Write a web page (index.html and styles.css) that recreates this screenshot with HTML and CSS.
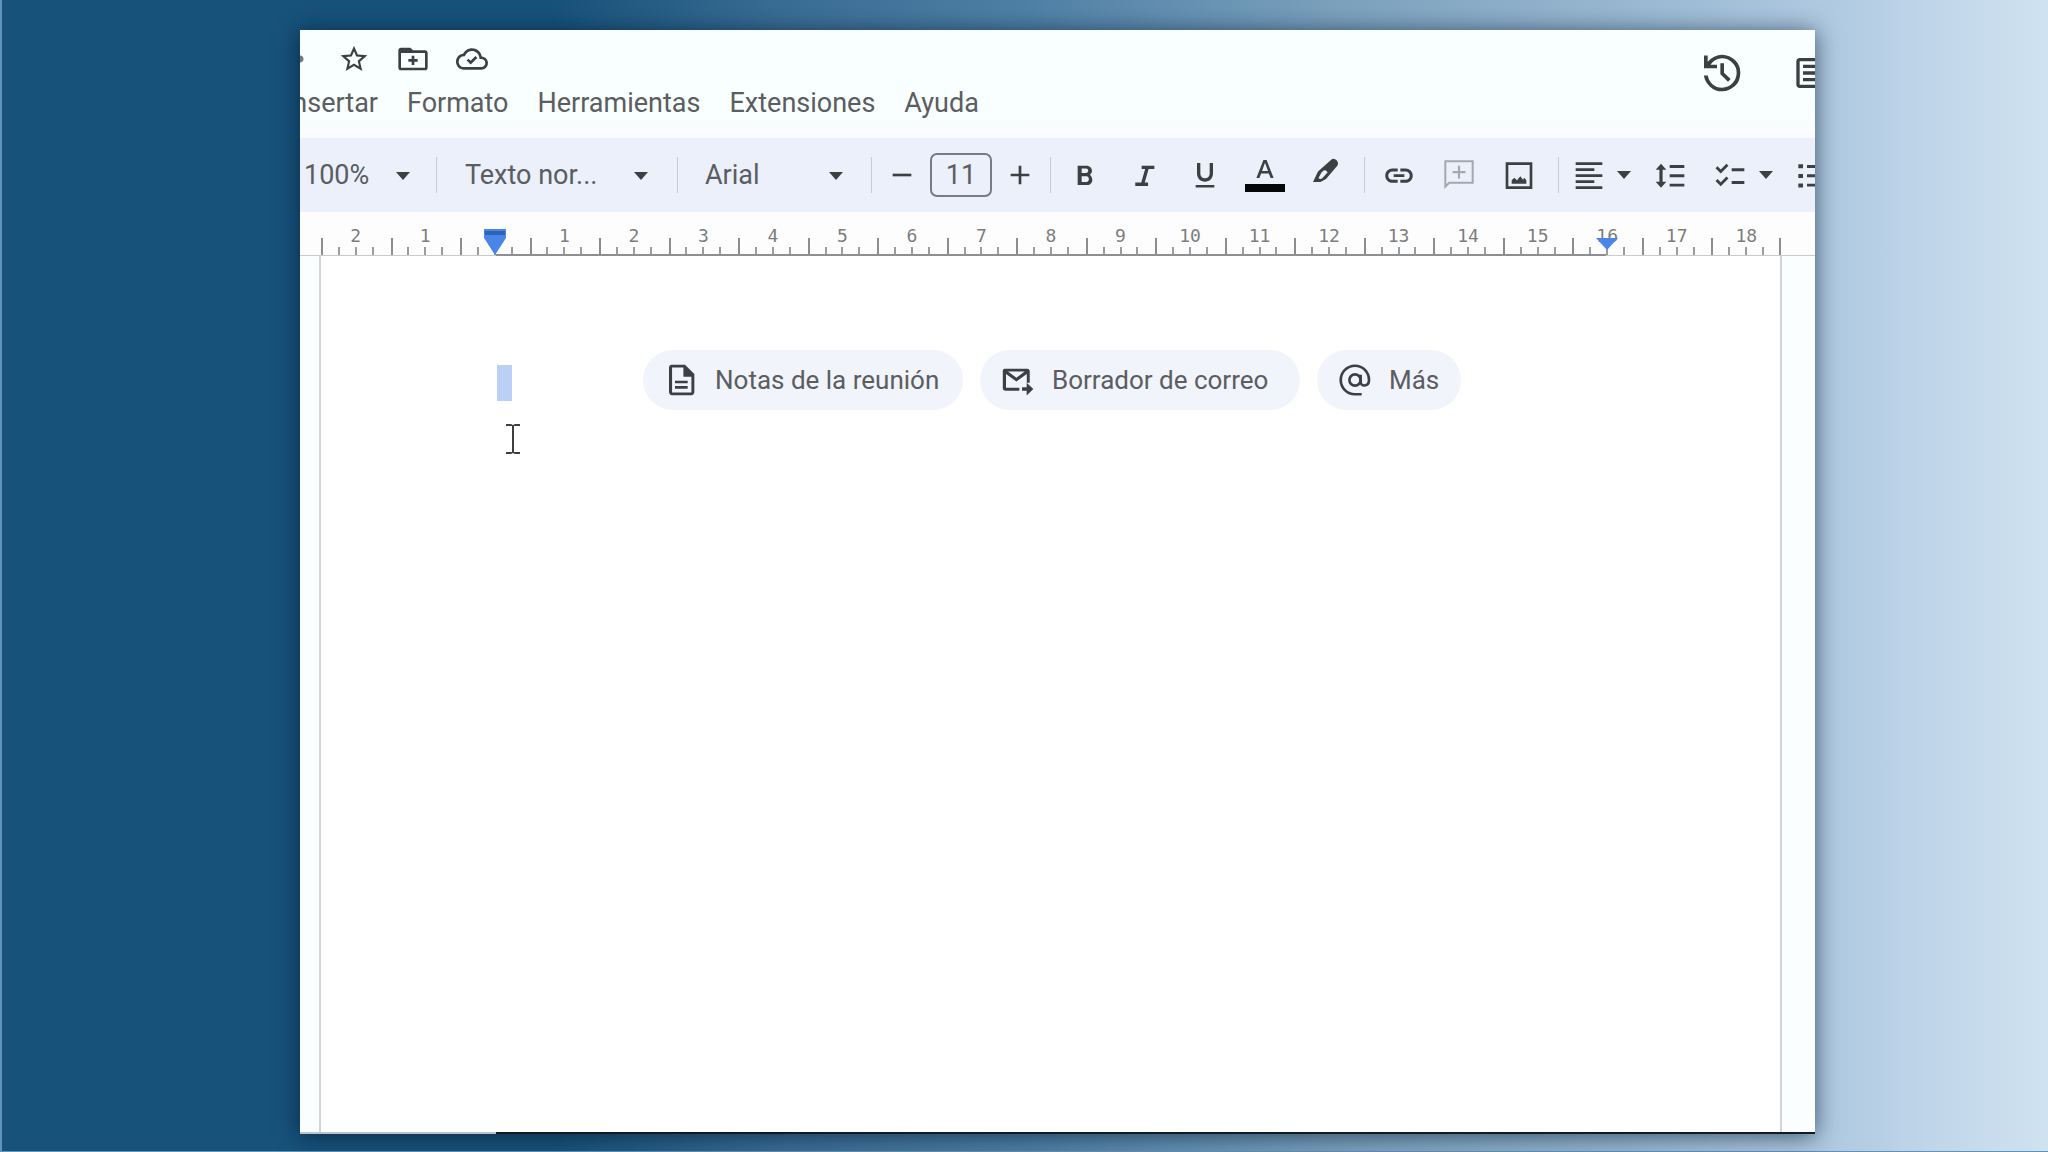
FILE: index.html
```html
<!DOCTYPE html>
<html lang="es">
<head>
<meta charset="utf-8">
<meta name="viewport" content="width=device-width, initial-scale=1">
<title>Documento sin título</title>
<link rel="stylesheet" href="styles.css">
</head>
<body>
<main class="window">
  <header class="header">
    <div class="header-main">
      <div class="title-row">
        <span class="title-dot"></span>
        <button class="icon-button" aria-label="Destacar"><svg class="icon" viewBox="0 0 24 24"><path d="M22 9.24l-7.19-.62L12 2 9.19 8.63 2 9.24l5.46 4.73L5.82 21 12 17.27 18.18 21l-1.63-7.03L22 9.24zM12 15.4l-3.76 2.27 1-4.28-3.32-2.88 4.38-.38L12 6.1l1.71 4.04 4.38.38-3.32 2.88 1 4.28L12 15.4z"/></svg></button>
        <button class="icon-button" aria-label="Mover"><svg class="icon" viewBox="0 0 24 24"><path d="M21 5.500h-9l-2-2H3c-1.100 0-2 .9-2 2v13c0 1.100.9 2 2 2h18c1.100 0 2-.9 2-2v-11c0-1.100-.9-2-2-2zm0 13H3v-11h18zM11 16.500h2v-2.500h2.500v-2H13V9.500h-2V12H8.500v2H11z"/></svg></button>
        <button class="icon-button" aria-label="Estado del documento"><svg class="icon" viewBox="0 0 24 24"><path d="M19.350 10.040C18.670 6.590 15.640 4 12 4 9.110 4 6.600 5.640 5.350 8.040 2.340 8.360 0 10.910 0 14c0 3.310 2.690 6 6 6h13c2.760 0 5-2.240 5-5 0-2.640-2.050-4.780-4.650-4.960zM19 18H6c-2.210 0-4-1.790-4-4 0-2.050 1.530-3.760 3.560-3.970l1.070-.11.5-.95C8.080 7.140 9.940 6 12 6c2.620 0 4.880 1.860 5.390 4.430l.3 1.500 1.530.11c1.560.1 2.780 1.410 2.780 2.960 0 1.650-1.350 3-3 3z"/><path d="M11 13.400l-1.600-1.600L8 13.200l3 3 5-5-1.400-1.400z"/></svg></button>
      </div>
      <nav class="menu">
        <button class="menu-item menu-item-cut">Insertar</button>
        <button class="menu-item">Formato</button>
        <button class="menu-item">Herramientas</button>
        <button class="menu-item">Extensiones</button>
        <button class="menu-item">Ayuda</button>
      </nav>
    </div>
    <div class="header-actions">
      <button class="action" aria-label="Historial"><svg class="icon-large" viewBox="0 0 24 24"><path d="M12 23q-4.200 0-7.200-2.800T1.100 13.500H3.500q.4 3.100 2.800 5.200T12 20.800q3.700 0 6.200-2.600T20.800 12t-2.600-6.200T12 3.200q-2.100 0-3.900 1T5.100 7H9v2.200H1.200V1.500h2.200v3.800q1.600-2 3.900-3.100T12 1q2.300 0 4.300.9t3.500 2.300 2.400 3.500.8 4.300-.8 4.300-2.400 3.500-3.500 2.300T12 23m3.600-5.800L11 12.700V6.200h2.200v5.600l4 3.800z"/></svg></button>
      <button class="action" aria-label="Comentarios"><svg class="icon-large" viewBox="0 0 24 24"><path d="M2 5c0-1.100.9-2 2-2h16c1.100 0 2 .9 2 2v19l-3-3H4c-1.100 0-2-.9-2-2zm2 0v14h16V5zM6 7h12v2H6zm0 4h12v2H6zm0 4h12v2H6z"/></svg></button>
    </div>
  </header>

  <div class="toolbar" role="toolbar" aria-label="Formato">
    <select class="pick pick-zoom" aria-label="Zoom"><option>100%</option></select>
    <span class="rule"></span>
    <select class="pick pick-style" aria-label="Estilo"><option>Texto nor...</option></select>
    <span class="rule"></span>
    <select class="pick pick-font" aria-label="Fuente"><option>Arial</option></select>
    <span class="rule"></span>
    <div class="size-group">
      <button class="step" aria-label="Reducir tamaño"><svg class="icon" viewBox="0 0 24 24"><path d="M5 11h14v2H5z"/></svg></button>
      <input class="size-input" type="text" value="11" aria-label="Tamaño de fuente">
      <button class="step" aria-label="Aumentar tamaño"><svg class="icon" viewBox="0 0 24 24"><path d="M5 11h6V5h2v6h6v2h-6v6h-2v-6H5z"/></svg></button>
    </div>
    <span class="rule"></span>
    <div class="group">
      <button class="tool" aria-label="Negrita"><svg class="icon" viewBox="0 0 24 24"><path d="M15.600 11.790c.97-.67 1.650-1.770 1.650-2.790 0-2.260-1.750-4-4-4H6.500v14.500h7.290c2.090 0 3.710-1.700 3.710-3.790 0-1.520-.86-3.320-1.900-3.920zM9.500 7.200h3.300c.9 0 1.600.7 1.600 1.600s-.7 1.700-1.600 1.700H9.500zm3.700 10H9.500v-4.300h3.700c1 0 1.700.9 1.700 2.100s-.7 2.200-1.700 2.200z"/></svg></button>
      <button class="tool" aria-label="Cursiva"><svg class="icon" viewBox="0 0 24 24"><path d="M9.500 5v2.500h2.600L9.200 17.700H4.700v2.500h9.600v-2.500h-2.500L14.700 7.500H19V5z"/></svg></button>
      <button class="tool" aria-label="Subrayado"><svg class="icon" viewBox="0 0 24 24"><path d="M12 17c3.300 0 6-2.700 6-6V3h-2.500v8c0 2-1.500 3.500-3.500 3.500S8.500 13 8.500 11V3H6v8c0 3.300 2.700 6 6 6zm-7 2.500v1.800h14v-1.800z"/></svg></button>
      <button class="tool" aria-label="Color del texto"><svg class="icon-wide" viewBox="0 0 40 36"><path d="M18.400 3h3.200l7 18h-3l-1.700-4.600h-7.800L14.400 21h-3zm-1.400 11h6L20 5.800z"/><path class="swatch" d="M0 27h40v8H0z"/></svg></button>
      <button class="tool" aria-label="Resaltar"><svg class="icon-wide" viewBox="0 0 40 36"><path fill-rule="evenodd" d="M8 25l5-10.500L26.500 2.500c3-2.400 8.300 2.600 6 6L21 22l-5.500 3zM16.500 15.500l-3 5.500c1 1.300 2.500 1 3.500.5l5.500-6c-1-2.500-3-3-4.500-1.500z"/></svg></button>
    </div>
    <span class="rule"></span>
    <div class="group">
      <button class="tool" aria-label="Insertar enlace"><svg class="icon" viewBox="0 0 24 24"><path d="M3.900 12.500c0-1.710 1.390-3.100 3.100-3.100h4v-2.200H7c-2.760 0-5.300 2.240-5.300 5.300s2.540 5.300 5.300 5.300h4v-2.200H7c-1.710 0-3.100-1.390-3.100-3.100zM8 13.500h8v-2H8zm9-6.300h-4v2.200h4c1.710 0 3.100 1.390 3.100 3.100s-1.390 3.100-3.100 3.100h-4v2.200h4c2.760 0 5.300-2.240 5.300-5.300s-2.540-5.300-5.300-5.300z"/></svg></button>
      <button class="tool" aria-label="Añadir comentario" disabled><svg class="icon" viewBox="0 0 24 24"><path d="M1 1h22v17.500H5L1 22.500zm1.500 1.500v16.400l1.900-1.900h17.100V2.500zM11.200 5h1.600v4h4v1.600h-4v4h-1.600v-4h-4V9h4z"/></svg></button>
      <button class="tool" aria-label="Insertar imagen"><svg class="icon" viewBox="0 0 24 24"><path d="M2 2.500h20v20H2zm2 2v16h16v-16zM6.500 18.500V16l2-2 2 2 2.500-3 2 2.500 1-1.500 1.500 2v2.500z"/></svg></button>
    </div>
    <span class="rule"></span>
    <button class="tool-menu" aria-label="Alinear"><svg class="icon" viewBox="0 0 24 24"><path d="M2 2.500h20v2H2zM2 7h14v2H2zm0 4.500h20v2H2zM2 16h14v2H2zm0 4.500h20v2H2z"/></svg><svg class="arrow" viewBox="0 0 14 8"><path d="M0 0h14L7 8z"/></svg></button>
    <button class="tool" aria-label="Interlineado"><svg class="icon" viewBox="0 0 24 24"><path d="M4.500 3.500l4 4.500H5.700v9h2.800l-4 4.500L.5 17h2.800V8H.5zM11 4.500h11v2.200H11zm0 7h11v2.200H11zm0 7h11v2.200H11z"/></svg></button>
    <button class="tool-menu" aria-label="Lista de comprobación"><svg class="icon" viewBox="0 0 24 24"><path d="M12.500 7H22v2.200h-9.500zm0 9.500H22v2.200h-9.500zM.4 7l1.500-1.500 2.400 2.400 4.300-4.300 1.500 1.500-5.800 5.800zm0 9.500L1.900 15l2.400 2.400 4.300-4.300 1.500 1.500-5.800 5.800z"/></svg><svg class="arrow" viewBox="0 0 14 8"><path d="M0 0h14L7 8z"/></svg></button>
    <button class="tool" aria-label="Lista con viñetas"><svg class="icon" viewBox="0 0 24 24"><path d="M1 4h3.500v3H1zm0 7.200h3.500v3H1zm0 7.200h3.500v3H1zM7.500 4.500H22v2.200H7.500zm0 7H22v2.200H7.500zm0 7H22v2.200H7.500z"/></svg></button>
  </div>

  <div class="ruler">
    <div class="scale">
      <span class="mark">2</span><span class="mark">1</span><span class="mark mark-start"><svg class="indent" viewBox="0 0 22 26"><path d="M0 0h22v9L11 26 0 9z"/><path class="indent-bar" d="M1 2h20v4H1z"/></svg></span><span class="mark">1</span><span class="mark">2</span><span class="mark">3</span><span class="mark">4</span><span class="mark">5</span><span class="mark">6</span><span class="mark">7</span><span class="mark">8</span><span class="mark">9</span><span class="mark">10</span><span class="mark">11</span><span class="mark">12</span><span class="mark">13</span><span class="mark">14</span><span class="mark">15</span><span class="mark">16<svg class="indent indent-end" viewBox="0 0 22 12"><path d="M0 0h22L11 12z"/></svg></span><span class="mark">17</span><span class="mark mark-last">18</span>
    </div>
  </div>

  <section class="canvas">
    <article class="page">
      <div class="line">
        <span class="selection"></span>
        <div class="chips">
          <button class="chip chip-wide"><svg class="icon" viewBox="0 0 24 24"><path d="M5 .5h10l7 7V21c0 1.300-.9 2.500-2.300 2.500H5.300C4 23.500 3 22.400 3 21V2.500C3 1.400 3.900.5 5 .5zm.3 2.200v18.600h14.500V9.500h-6V2.700zM7.500 12.500h9.500v2H7.500zm0 4h9.500v2H7.500z"/></svg>Notas de la reunión</button>
          <button class="chip chip-wide"><svg class="icon" viewBox="0 0 24 24"><path d="M2 3.500h17c1.100 0 1.800.8 1.800 1.800V14h-2.200V7.500l-7.800 5.700L3 7.500v10.300h10V20H2.600c-1.100 0-2-.8-2-1.900V5.300c0-1 .5-1.800 1.400-1.800zm2.500 2.200l6.300 4.600 6.200-4.600zM18.500 14l5 4.800-5 4.800v-3.500H15v-2.600h3.500z"/></svg>Borrador de correo</button>
          <button class="chip"><svg class="icon" viewBox="0 0 24 24"><g class="stroke"><circle cx="12" cy="12" r="4.200"/><path d="M16.200 8v5.500c0 3.800 6.300 3.600 6.300-1.500C22.500 6 17.900 1.300 12 1.300S1.300 6.100 1.300 12 6.100 22.700 12 22.700h5"/></g></svg>Más</button>
        </div>
        <svg class="ibeam" viewBox="0 0 14 32"><path d="M0 1h5l2 1 2-1h5v2H8v26h6v2H9l-2-1-2 1H0v-2h6V3H0z"/></svg>
      </div>
    </article>
  </section>
</main>
</body>
</html>
```
FILE: styles.css
```css
* { box-sizing: border-box; }

body {
  margin: 0;
  min-height: 100vh;
  display: flex;
  padding: 30px 233px 18px 300px;
  font-family: Roboto, "Liberation Sans", sans-serif;
  color: #5a5d61;
  background: linear-gradient(90deg, #17527a 0%, #17527a 27%, #3a6d94 38%, #4e80a6 50%, #7ba1bd 65%, #9ab9d3 80%, #b1cbe2 90%, #bfd5e9 94%, #cfe2f0 100%);
  box-shadow: inset 2px -1px #5f93bb;
}

button, select, input { font: inherit; color: inherit; }
button { border: 0; padding: 0; background: none; }
svg { fill: #3c4043; flex: none; display: block; }

.window {
  flex: 1;
  min-width: 0;
  display: flex;
  flex-direction: column;
  overflow: hidden;
  background: #fafefe;
  border-bottom: 2px solid;
  border-image: linear-gradient(90deg, #b9c6c9 13%, #101c1e 13%) 1;
  box-shadow: 0 2px 22px rgba(0, 22, 45, .65);
}

.icon { width: 32px; height: 32px; }
.icon-large { width: 40px; height: 40px; }
.icon-wide { width: 40px; height: 36px; }

.header {
  display: flex;
  justify-content: space-between;
  height: 108px;
  overflow: hidden;
  background: linear-gradient(#f9fefe 80%, #fafafe);
}
.title-row {
  display: flex;
  align-items: center;
  gap: 27px;
  padding-top: 12px;
  height: 46px;
}
.title-dot {
  width: 11px;
  height: 8px;
  background: radial-gradient(circle at 0 50%, #75797c 3px, transparent 4px);
}
.menu {
  display: flex;
  gap: 29px;
  height: 54px;
  font-size: 27px;
  line-height: 54px;
}
.menu-item-cut { margin-left: -15px; }
.header-actions {
  display: flex;
  gap: 51px;
  padding-top: 23px;
  margin-right: -18px;
  align-items: flex-start;
}

.toolbar {
  display: flex;
  align-items: center;
  height: 74px;
  overflow: hidden;
  background: #ebf0fa;
  font-size: 27px;
}
.rule { flex: none; width: 1px; height: 36px; background: #c5cad4; }
.pick {
  flex: none;
  appearance: none;
  border: 0;
  height: 44px;
  background: url("data:image/svg+xml,%3Csvg xmlns='http://www.w3.org/2000/svg' viewBox='0 0 14 8'%3E%3Cpath fill='%233c4043' d='M0 0h14L7 8z'/%3E%3C/svg%3E") no-repeat;
  background-size: 14px 8px;
}
.pick-zoom { width: 136px; padding: 0 0 0 4px; background-position: 96px 19px; }
.pick-style { width: 240px; padding: 0 0 0 28px; background-position: 197px 19px; }
.pick-font { width: 193px; padding: 0 0 0 27px; background-position: 151px 19px; }
.size-group {
  flex: none;
  display: flex;
  gap: 6px;
  align-items: center;
  padding: 0 8px;
}
.step { width: 44px; display: grid; place-items: center; }
.size-input {
  width: 62px;
  height: 44px;
  padding: 0;
  border: 2px solid #777b83;
  border-radius: 7px;
  background: none;
  text-align: center;
}
.group { flex: none; display: flex; padding: 0 9px 0 4px; }
.tool { flex: none; width: 60px; height: 44px; display: grid; place-items: center; }
.tool:disabled { opacity: .4; }
.swatch { fill: #05070b; }
.tool-menu {
  flex: none;
  height: 44px;
  display: flex;
  align-items: center;
  gap: 12px;
  padding: 0 10px 0 14px;
}
.arrow { width: 14px; height: 8px; }

.ruler {
  height: 44px;
  padding: 0 34px 0 21px;
  border-bottom: 1px solid #c9cccd;
  background: #fdfdfe;
}
.scale {
  position: relative;
  display: grid;
  grid-template: 43px / repeat(21, 1fr);
}
.scale::after {
  content: "";
  position: absolute;
  left: 12%;
  right: 12%;
  bottom: -1px;
  height: 2px;
  background: #8e8f90;
}
.mark {
  position: relative;
  text-align: center;
  font: 18px/48px "DejaVu Sans Mono", monospace;
  color: #7b7d7f;
  background:
    linear-gradient(#8b8d8f, #8b8d8f) 0 100% / 2px 17px,
    linear-gradient(#9a9c9e, #9a9c9e) 25% 100% / 2px 8px,
    linear-gradient(#9a9c9e, #9a9c9e) 50% 100% / 2px 8px,
    linear-gradient(#9a9c9e, #9a9c9e) 75% 100% / 2px 8px;
  background-repeat: no-repeat;
}
.mark-last::after {
  content: "";
  position: absolute;
  right: 0;
  bottom: 0;
  width: 2px;
  height: 17px;
  background: #8b8d8f;
}
.indent {
  position: absolute;
  z-index: 1;
  left: calc(50% - 11px);
  top: 17px;
  width: 22px;
  height: 26px;
  fill: #4a86e8;
}
.indent-bar { fill: #2f63b5; }
.indent-end { top: 26px; height: 12px; }

.canvas { flex: 1; display: flex; padding: 0 33px 0 19px; }
.page {
  flex: 1;
  background: #fff;
  border: solid #d3d6d7;
  border-width: 0 2px;
  padding: 94px 0 0 176px;
}
.line { position: relative; display: flex; align-items: center; }
.selection { width: 15px; height: 36px; margin-top: 6px; background: #bcd0f5; }
.chips { display: flex; gap: 17px; margin-left: 131px; }
.chip {
  display: flex;
  align-items: center;
  gap: 18px;
  height: 60px;
  padding: 0 22px;
  border-radius: 30px;
  background: #f2f4fb;
  font-size: 26px;
  white-space: nowrap;
}
.chip-wide { min-width: 320px; }
.stroke { fill: none; stroke: #3c4043; stroke-width: 2; }
.ibeam {
  position: absolute;
  left: 9px;
  top: 73px;
  width: 14px;
  height: 32px;
}
```
